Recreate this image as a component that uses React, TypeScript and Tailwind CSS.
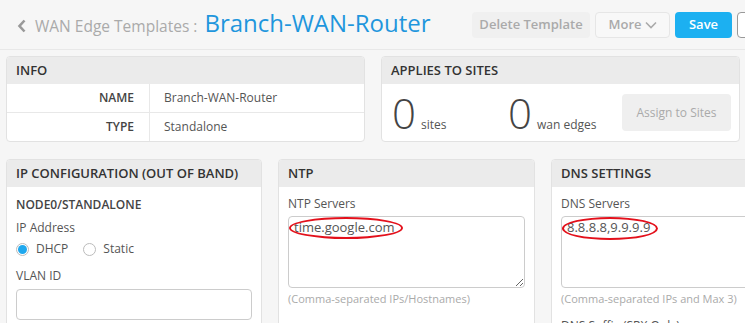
import { useState } from 'react';

const Card = ({ title, className, children }: { title: string; className?: string; children: React.ReactNode }) => (
    <div className={`bg-white border border-[#e2e2e2] rounded-[4px] overflow-hidden shrink-0 ${className ?? ''}`}>
        <div className="h-[27px] bg-[#ebebeb] px-[9px] flex items-center text-[13px] font-semibold text-[#333]">{title}</div>
        {children}
    </div>
);

const Radio = ({ checked, label, onClick }: { checked: boolean; label: string; onClick: () => void }) => (
    <label className="flex items-center gap-[7px] cursor-pointer" onClick={onClick}>
        <span className="w-[13px] h-[13px] rounded-full border border-[#bbb] bg-white flex items-center justify-center">
            {checked && <span className="w-[9px] h-[9px] rounded-full bg-[#1fa8ee]" />}
        </span>
        <span className="text-[12px] text-[#555]">{label}</span>
    </label>
);

const App = () => {
    const [mode, setMode] = useState('dhcp');

    return (
        <div className="w-[745px] h-[323px] overflow-hidden bg-[#f6f6f6] text-[#333]" style={{ fontFamily: '"Open Sans", sans-serif' }}>
            <div className="w-[900px] h-[50px] flex items-center border-b border-[#e8e8e8]">
                <div className="flex items-baseline pl-[17px] w-[467px]">
                    <svg width="10" height="14" viewBox="0 0 10 14" className="mr-[8px] self-center mt-[3px]">
                        <polyline points="7.5,1.5 2.5,7 7.5,12.5" fill="none" stroke="#999" strokeWidth="2.6" />
                    </svg>
                    <span className="text-[15.5px] text-[#aaa]">WAN Edge Templates :</span>
                    <span className="text-[24px] text-[#1f96dd] ml-[7px] leading-none">Branch-WAN-Router</span>
                </div>
                <div className="flex items-center gap-[5px] ml-[5px]">
                    <button className="w-[118px] h-[26px] rounded-[4px] bg-[#f0f0f0] text-[13px] font-semibold text-[#aaa]">Delete Template</button>
                    <button className="w-[75px] h-[26px] rounded-[4px] bg-[#f8f8f8] border border-[#e6e6e6] text-[13px] font-semibold text-[#aaa] flex items-center justify-center gap-[3px]">
                        More
                        <svg width="12" height="8" viewBox="0 0 12 8"><polyline points="1,1.5 6,6.5 11,1.5" fill="none" stroke="#aaa" strokeWidth="1.6" /></svg>
                    </button>
                    <button className="w-[57px] h-[26px] rounded-[4px] bg-[#1cb0f1] text-[13px] font-semibold text-white">Save</button>
                    <button className="w-[60px] h-[26px] rounded-[4px] bg-white border border-[#999]" />
                </div>
            </div>

            <div className="flex gap-[16px] pl-[6px] pt-[6px]">
                <Card title="INFO" className="w-[359px]">
                    <div className="flex h-[29px] border-b border-[#e8e8e8]">
                        <div className="w-[143px] border-r border-[#e8e8e8] flex items-center justify-end pr-[15px] text-[12px] font-semibold text-[#444]">NAME</div>
                        <div className="flex items-center pl-[14px] text-[12px] text-[#555]">Branch-WAN-Router</div>
                    </div>
                    <div className="flex h-[28px]">
                        <div className="w-[143px] border-r border-[#e8e8e8] flex items-center justify-end pr-[15px] text-[12px] font-semibold text-[#444]">TYPE</div>
                        <div className="flex items-center pl-[14px] text-[12px] text-[#555]">Standalone</div>
                    </div>
                </Card>
                <Card title="APPLIES TO SITES" className="w-[359px]">
                    <div className="h-[57px] flex items-center pl-[10px] pr-[8px]">
                        <div className="flex items-baseline w-[116px]">
                            <span className="text-[42px] font-light text-[#444] leading-none">0</span>
                            <span className="text-[12px] text-[#555] ml-[5px]">sites</span>
                        </div>
                        <div className="flex items-baseline">
                            <span className="text-[42px] font-light text-[#444] leading-none">0</span>
                            <span className="text-[12px] text-[#555] ml-[5px]">wan edges</span>
                        </div>
                        <button className="ml-auto w-[109px] h-[37px] rounded-[4px] bg-[#efefef] text-[12px] text-[#aaa]">Assign to Sites</button>
                    </div>
                </Card>
            </div>

            <div className="flex gap-[16px] pl-[6px] pt-[17px]">
                <Card title="IP CONFIGURATION (OUT OF BAND)" className="w-[256px] h-[200px]">
                    <div className="px-[9px] pt-[9px]">
                        <div className="text-[12px] font-semibold text-[#444]">NODE0/STANDALONE</div>
                        <div className="text-[12px] text-[#555] mt-[5px]">IP Address</div>
                        <div className="flex gap-[15px] mt-[3px]">
                            <Radio checked={mode === 'dhcp'} label="DHCP" onClick={() => setMode('dhcp')} />
                            <Radio checked={mode === 'static'} label="Static" onClick={() => setMode('static')} />
                        </div>
                        <div className="text-[12px] text-[#555] mt-[9px]">VLAN ID</div>
                        <input className="mt-[4px] w-[236px] h-[31px] border border-[#ccc] rounded-[4px] bg-white outline-none" />
                    </div>
                </Card>
                <Card title="NTP" className="w-[257px] h-[200px]">
                    <div className="px-[9px] pt-[8px]">
                        <div className="text-[12px] text-[#555]">NTP Servers</div>
                        <div className="relative mt-[3px]">
                            <textarea readOnly value="time.google.com" className="block w-[237px] h-[72px] border border-[#ccc] rounded-[4px] px-[5px] py-[1px] text-[13px] text-[#555] outline-none" />
                            <div className="absolute left-[1px] top-[1px] w-[114px] h-[22px] border-2 border-[#e3101b] rounded-[50%]" />
                        </div>
                        <div className="text-[11px] text-[#aaa] mt-[3px]">(Comma-separated IPs/Hostnames)</div>
                    </div>
                </Card>
                <Card title="DNS SETTINGS" className="w-[257px] h-[200px]">
                    <div className="px-[9px] pt-[8px]">
                        <div className="text-[12px] text-[#555]">DNS Servers</div>
                        <div className="relative mt-[3px]">
                            <textarea readOnly value="8.8.8.8,9.9.9.9" className="block w-[237px] h-[72px] border border-[#ccc] rounded-[4px] px-[5px] py-[1px] text-[13px] text-[#555] outline-none" />
                            <div className="absolute left-[1px] top-[1px] w-[96px] h-[23px] border-2 border-[#e3101b] rounded-[50%]" />
                        </div>
                        <div className="text-[11px] text-[#aaa] mt-[3px]">(Comma-separated IPs and Max 3)</div>
                        <div className="text-[12px] text-[#555] mt-[9px]">DNS Suffix (SRX Only)</div>
                    </div>
                </Card>
            </div>
        </div>
    );
};

export default App;
